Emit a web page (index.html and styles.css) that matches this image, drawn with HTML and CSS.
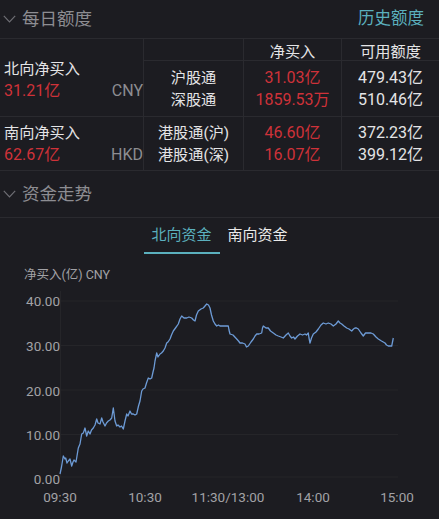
FILE: index.html
```html
<!DOCTYPE html>
<html lang="zh-CN">
<head>
<meta charset="utf-8">
<title>每日额度</title>
<link rel="stylesheet" href="styles.css">
</head>
<body>
<div class="page">
  <div class="sec-head first">
    <div class="sec-title">
      <svg class="chev" width="13" height="8" viewBox="0 0 13 8"><polyline points="0.8,0.8 6.5,6.8 12.2,0.8" fill="none" stroke="#6e6e74" stroke-width="1.2"/></svg>
      <span>每日额度</span>
    </div>
    <span class="link">历史额度</span>
  </div>

  <div class="quota">
    <div class="cell lead span2">
      <div class="lead-grid">
        <span class="name">北向净买入</span>
        <span class="red num">31.21亿</span>
        <span class="cur">CNY</span>
      </div>
    </div>
    <div class="cell hd br"></div>
    <div class="cell hd br">净买入</div>
    <div class="cell hd">可用额度</div>

    <div class="cell row1 br"><span>沪股通</span><span>深股通</span></div>
    <div class="cell row1 br"><span class="red num">31.03亿</span><span class="red num">1859.53万</span></div>
    <div class="cell row1"><span class="num">479.43亿</span><span class="num">510.46亿</span></div>

    <div class="cell lead row2">
      <div class="lead-grid">
        <span class="name">南向净买入</span>
        <span class="red num">62.67亿</span>
        <span class="cur">HKD</span>
      </div>
    </div>
    <div class="cell row2 br"><span>港股通(沪)</span><span>港股通(深)</span></div>
    <div class="cell row2 br"><span class="red num">46.60亿</span><span class="red num">16.07亿</span></div>
    <div class="cell row2"><span class="num">372.23亿</span><span class="num">399.12亿</span></div>
  </div>

  <div class="sec-head second">
    <div class="sec-title">
      <svg class="chev" width="13" height="8" viewBox="0 0 13 8"><polyline points="0.8,0.8 6.5,6.8 12.2,0.8" fill="none" stroke="#6e6e74" stroke-width="1.2"/></svg>
      <span>资金走势</span>
    </div>
  </div>

  <div class="tabs">
    <div class="tab active">北向资金</div>
    <div class="tab">南向资金</div>
  </div>

  <div class="chart">
    <div class="caption">净买入(亿) CNY</div>
    <svg class="plot" width="439" height="236" viewBox="0 283 439 236">
      <g stroke="#252529" stroke-width="1">
        <line x1="60" y1="300" x2="398" y2="300"/>
        <line x1="60" y1="344.5" x2="398" y2="344.5"/>
        <line x1="60" y1="389" x2="398" y2="389"/>
        <line x1="60" y1="433.5" x2="398" y2="433.5"/>
        <line x1="60" y1="476" x2="398" y2="476"/>
        <line x1="60.5" y1="290" x2="60.5" y2="476"/>
      </g>
      <g class="ylab" text-anchor="end">
        <text x="60" y="304.5">40.00</text>
        <text x="60" y="349.5">30.00</text>
        <text x="60" y="394.5">20.00</text>
        <text x="60" y="438.5">10.00</text>
        <text x="60" y="482.5">0.00</text>
      </g>
      <g class="xlab" text-anchor="middle">
        <text x="60" y="500.5">09:30</text>
        <text x="145" y="500.5">10:30</text>
        <text x="228" y="500.5">11:30/13:00</text>
        <text x="313" y="500.5">14:00</text>
        <text x="397" y="500.5">15:00</text>
      </g>
      <polyline fill="none" stroke="#6d9bd6" stroke-width="1.3" stroke-linejoin="round"
        points="60,473 61.5,466 63.3,455 65,458 65.7,457 67,462 68.3,460 70,458 71.7,465 73,461 74,459 76,461 77,455 78.3,447 80,443 81,437 81.7,433 83.3,432 84,430 85,427 86.7,435 88.3,430 90,433 91.5,429 93.3,427 95,424 96.7,418 98,422 100,423 101.7,417 103,421 105,425 106.5,422 108.3,420 110,419 111.7,417 113.3,407 115,420 116.7,425 118,424 120,426 121.5,425 123.3,428 125,420 126.7,413 128,415 130,410 131.5,413 133.3,413 135,414 136.7,413 138.5,405 140,400 141.7,390 143,388 145,387 146.5,382 148.3,377 150,378 151.7,377 153,371 154,367 155,360 156.7,352 158,356 160,353 161.5,352 163.3,350 165,347 166.7,342 168,341 170,338 171.5,334 173.3,330 175.5,327 178.3,323 180,318 181.7,315 184,317 186.7,317 189,316 191.7,317 193.5,319 195,320 196.5,314 198.3,310 201,308 203.3,307 205,305 206.7,303 208.5,304 210,307 211.5,314 213.3,320 215,323 216.7,325 218.5,324 220,325 224,325 228.3,325 229,329 230,333 233,334 236.7,338 238.5,340 240,342 242.5,342 245,343 246.5,346 248.3,345 251,341 253.3,338 255,335 256.7,333 259,333 261.7,332 262.5,327 263.3,325 266,327 268.3,327 270.5,330 273.3,332 276,334 278.3,335 281,336 283.3,337 286,334 288.3,332 290,335 291.7,337 293.5,336 295,338 297.5,335 300,333 302.5,334 305,333 306.5,334 308.3,332 309,337 310,342 311.5,337 313.3,333 316,331 318.3,328 321,324 323.3,322 326,323 328.3,322 331,323 333.3,325 336,323 338.3,320 340,322 341.7,323 344,325 346.7,327 349,328 351.7,330 353.5,328 355,327 356.5,327 358.3,328 361,332 363.3,335 365.5,332 368.3,332 371,332 373.3,333 376,336 378.3,338 381.5,340 385,342 386.5,344 388.3,345 390,345 391.7,345 392.5,341 393.3,337"/>
    </svg>
  </div>
</div>
</body>
</html>
```

FILE: styles.css
```css
html, body {
  margin: 0;
  padding: 0;
  background: #1c1c21;
}

.page {
  width: 439px;
  height: 519px;
  overflow: hidden;
  background: #1c1c21;
  color: #e4e4e6;
  font-family: Roboto, "Noto Sans CJK SC", sans-serif;
}

.sec-head {
  display: flex;
  align-items: center;
  justify-content: space-between;
  box-sizing: border-box;
  border-bottom: 1px solid #2a2a2f;
}

.sec-head.first {
  height: 39px;
}

.sec-head.second {
  height: 47px;
}

.sec-title {
  display: flex;
  align-items: center;
  color: #8d8d92;
  font-size: 17.5px;
  line-height: 22px;
}

.chev {
  display: block;
  margin-left: 3px;
  margin-right: 6px;
}

.link {
  color: #5bb0be;
  font-size: 16.5px;
  line-height: 22px;
  margin-right: 15px;
}

.quota {
  display: grid;
  grid-template-columns: 144px 100px 98px 97px;
  grid-template-rows: 22px 56px 53px;
  border-bottom: 1px solid #2a2a2f;
  box-sizing: border-box;
  font-size: 15.2px;
}

.cell {
  box-sizing: border-box;
  border-bottom: 1px solid #2a2a2f;
  display: flex;
  flex-direction: column;
  justify-content: center;
  align-items: center;
  line-height: 22px;
}

.num {
  font-size: 16px;
}

.row2 {
  border-bottom: none;
}

.br {
  border-right: 1px solid #2a2a2f;
}

.hd {
  justify-content: flex-start;
  padding-top: 4px;
  line-height: 18px;
}

.lead {
  grid-column: 1;
  border-right: 1px solid #2a2a2f;
  align-items: stretch;
  padding-left: 4px;
  padding-right: 0;
}

.lead.span2 {
  grid-row: 1 / 3;
  padding-top: 5px;
}

.lead-grid {
  display: grid;
  grid-template-columns: 1fr auto;
  grid-template-rows: 22px 22px;
}

.lead-grid .name {
  grid-column: 1 / 3;
}

.cur {
  color: #8d8d92;
  font-size: 16px;
  text-align: right;
}

.red {
  color: #cf3239;
}

.tabs {
  display: flex;
  justify-content: center;
  height: 36px;
  font-size: 15px;
}

.tab {
  width: 76px;
  box-sizing: border-box;
  text-align: center;
  line-height: 34px;
  color: #eaeaea;
}

.tab.active {
  color: #5bb0be;
  border-bottom: 2px solid #5bb0be;
}

.chart {
  padding-top: 12px;
}

.caption {
  padding-left: 24px;
  font-size: 12.5px;
  line-height: 18px;
  color: #a2a2a6;
}

.plot {
  display: block;
}

.ylab text, .xlab text {
  font-family: Roboto, sans-serif;
  font-size: 13.5px;
  fill: #a2a2a6;
}
```
